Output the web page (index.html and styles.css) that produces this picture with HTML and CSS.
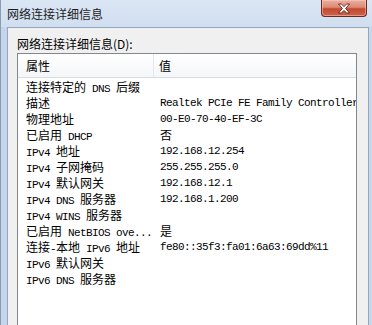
FILE: index.html
```html
<!DOCTYPE html>
<html lang="zh-CN">

<head>
    <meta charset="UTF-8">
    <meta name="viewport" content="width=device-width, initial-scale=1.0">
    <title>网络连接详细信息</title>
    <link rel="stylesheet" href="styles.css">
</head>

<body>
    <div class="window">
        <div class="titlebar">
            <span class="title">网络连接详细信息</span>
            <div class="close">
                <svg width="14" height="11" viewBox="0 0 14 11">
                    <path d="M1.5 1 L4.5 1 L7 3.6 L9.5 1 L12.5 1 L8.6 5.5 L12.5 10 L9.5 10 L7 7.4 L4.5 10 L1.5 10 L5.4 5.5 Z"
                        fill="#fff" stroke="#5a2118" stroke-width="0.9" stroke-linejoin="round" />
                </svg>
            </div>
        </div>

        <div class="panel">
            <div class="caption">网络连接详细信息(D):</div>
            <div class="listbox">
                <div class="head">
                    <div class="prop">属性</div>
                    <div class="val">值</div>
                </div>
                <div class="rows">
                    <div class="row">
                        <div class="prop">连接特定的<span class="m"> DNS </span>后缀</div>
                        <div class="val"></div>
                    </div>
                    <div class="row">
                        <div class="prop">描述</div>
                        <div class="val m">Realtek PCIe FE Family Controller</div>
                    </div>
                    <div class="row">
                        <div class="prop">物理地址</div>
                        <div class="val m">00-E0-70-40-EF-3C</div>
                    </div>
                    <div class="row">
                        <div class="prop">已启用<span class="m"> DHCP</span></div>
                        <div class="val">否</div>
                    </div>
                    <div class="row">
                        <div class="prop"><span class="m">IPv4 </span>地址</div>
                        <div class="val m">192.168.12.254</div>
                    </div>
                    <div class="row">
                        <div class="prop"><span class="m">IPv4 </span>子网掩码</div>
                        <div class="val m">255.255.255.0</div>
                    </div>
                    <div class="row">
                        <div class="prop"><span class="m">IPv4 </span>默认网关</div>
                        <div class="val m">192.168.12.1</div>
                    </div>
                    <div class="row">
                        <div class="prop"><span class="m">IPv4 DNS </span>服务器</div>
                        <div class="val m">192.168.1.200</div>
                    </div>
                    <div class="row">
                        <div class="prop"><span class="m">IPv4 WINS </span>服务器</div>
                        <div class="val"></div>
                    </div>
                    <div class="row">
                        <div class="prop">已启用<span class="m"> NetBIOS ove...</span></div>
                        <div class="val">是</div>
                    </div>
                    <div class="row">
                        <div class="prop">连接<span class="m">-</span>本地<span class="m"> IPv6 </span>地址</div>
                        <div class="val m">fe80::35f3:fa01:6a63:69dd%11</div>
                    </div>
                    <div class="row">
                        <div class="prop"><span class="m">IPv6 </span>默认网关</div>
                        <div class="val"></div>
                    </div>
                    <div class="row">
                        <div class="prop"><span class="m">IPv6 DNS </span>服务器</div>
                        <div class="val"></div>
                    </div>
                </div>
            </div>
        </div>
    </div>
</body>

</html>
```

FILE: styles.css
```css
body {
    margin: 0;
    padding: 0;
    font-family: "Noto Sans CJK SC", "Noto Sans", sans-serif;
    font-size: 12px;
    color: #000;
    background-color: #c9d9ec;
    overflow: hidden;
}

.window {
    width: 372px;
    height: 325px;
    display: flex;
    flex-direction: column;
    box-sizing: border-box;
    border-left: 1px solid #8a9cb4;
    background: linear-gradient(to right, #c4d5ea, #d2e0f0 40%, #c8d8ec);
}

.titlebar {
    height: 27px;
    flex: none;
    display: flex;
    align-items: center;
    padding-left: 6px;
    background: linear-gradient(to bottom, #dbe6f4, #d0def0);
}

.title {
    font-size: 12px;
    line-height: 16px;
    color: #1e1e1e;
    margin-top: 1px;
}

.close {
    margin-left: auto;
    margin-right: 5px;
    align-self: flex-start;
    width: 44px;
    height: 16px;
    border: 1px solid #6a2a20;
    border-top: none;
    border-radius: 0 0 4px 4px;
    background: linear-gradient(to bottom, #eab0a2 0%, #dc8a74 45%, #c24a30 55%, #d0614a 100%);
    box-shadow: inset 0 0 0 1px rgba(255, 210, 200, 0.5);
    display: flex;
    justify-content: center;
    align-items: center;
}

.panel {
    flex: 1;
    min-height: 0;
    margin: 0 3px 0 6px;
    border: 1px solid #94a6bd;
    border-bottom: none;
    background-color: #f0f0f0;
    padding: 8px 11px 0 9px;
    display: flex;
    flex-direction: column;
}

.caption {
    line-height: 16px;
    height: 16px;
    margin-bottom: 1px;
    white-space: nowrap;
}

.m {
    font-family: "Liberation Mono", monospace;
    font-size: 11px;
    letter-spacing: -0.6px;
}

.listbox {
    flex: 1;
    border: 1px solid #828790;
    border-bottom: none;
    background-color: #fff;
    overflow: hidden;
}

.head {
    display: grid;
    grid-template-columns: 136px 1fr;
    height: 23px;
    border-bottom: 1px solid #d8dde5;
    background: linear-gradient(to bottom, #ffffff, #f5f6f8);
}

.head .prop {
    border-right: 1px solid #e3e6eb;
}

.head div {
    line-height: 23px;
}

.rows {
    padding-top: 1px;
}

.row {
    display: grid;
    grid-template-columns: 136px 1fr;
    height: 16px;
    line-height: 16px;
}

.prop {
    padding-left: 8px;
    white-space: nowrap;
    overflow: hidden;
}

.val {
    padding-left: 6px;
    white-space: nowrap;
    overflow: hidden;
}

.head .val {
    padding-left: 5px;
}
```
